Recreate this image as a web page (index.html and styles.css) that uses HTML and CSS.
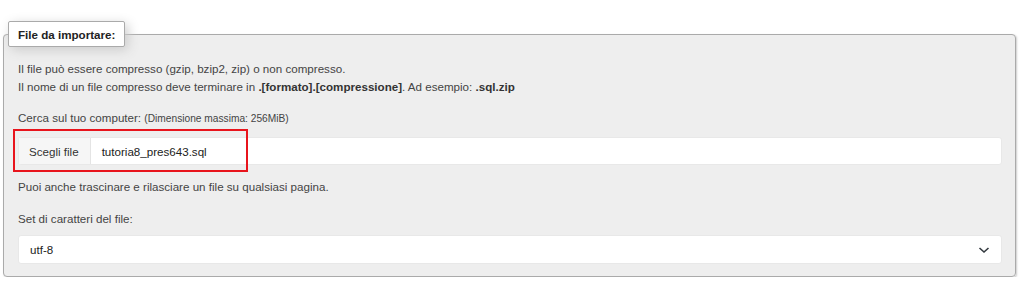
FILE: index.html
```html
<!DOCTYPE html>
<html lang="it">
<head>
    <meta charset="UTF-8">
    <title>Importa</title>
    <link rel="stylesheet" href="styles.css">
</head>
<body>
    <fieldset class="import-box">
        <legend>File da importare:</legend>
        <p class="hint">Il file può essere compresso (gzip, bzip2, zip) o non compresso.<br>
        Il nome di un file compresso deve terminare in <b>.[formato].[compressione]</b>. Ad esempio: <b>.sql.zip</b></p>

        <p class="label">Cerca sul tuo computer: <small>(Dimensione massima: 256MiB)</small></p>
        <div class="file-wrap">
            <div class="file-input">
                <span class="file-btn">Scegli file</span>
                <span class="file-name">tutoria8_pres643.sql</span>
            </div>
            <div class="highlight"></div>
        </div>

        <p class="label">Puoi anche trascinare e rilasciare un file su qualsiasi pagina.</p>

        <p class="label charset">Set di caratteri del file:</p>
        <div class="select">
            <span>utf-8</span>
            <svg width="12" height="8" viewBox="0 0 12 8"><path d="M1.5 2 L6 6 L10.5 2" fill="none" stroke="#343a40" stroke-width="1.6"/></svg>
        </div>
    </fieldset>
</body>
</html>
```

FILE: styles.css
```css
body {
    font-family: "Liberation Sans", Arial, sans-serif;
    font-size: 11.6px;
    color: #444;
    margin: 0;
    padding: 21px 8px 0 3px;
    background: #fff;
}
.import-box {
    margin: 0;
    padding: 13px 13px 12px 14px;
    background: #eee;
    border: 1px solid #aaa;
    border-radius: 4px;
    box-shadow: 1px 1px 2px #ccc;
}
.import-box legend {
    background: #fff;
    border: 1px solid #aaa;
    border-radius: 2px;
    box-shadow: 3px 3px 12px #ccc;
    padding: 6px 9px 5px 9px;
    margin-left: -10px;
    font-weight: bold;
    color: #222;
}
p {
    margin: 0;
    line-height: 18px;
}
b {
    color: #333;
}
.label {
    margin-top: 13px;
}
.charset {
    margin-top: 14px;
}
small {
    font-size: 10.2px;
}
.file-wrap {
    position: relative;
    margin-top: 9px;
    margin-bottom: 1px;
}
.file-input {
    display: flex;
    height: 26px;
    background: #fff;
    border: 1px solid #e8e8e8;
    border-radius: 3px;
    color: #222;
}
.file-btn {
    display: flex;
    align-items: center;
    padding: 0 11px 0 10px;
    background: #f6f6f6;
    border-right: 1px solid #e4e4e4;
    color: #333;
}
.file-name {
    display: flex;
    align-items: center;
    padding-left: 11px;
}
.highlight {
    position: absolute;
    left: -5px;
    top: -8px;
    width: 231px;
    height: 39px;
    border: 2px solid #e8141c;
}
.select {
    display: flex;
    align-items: center;
    justify-content: space-between;
    height: 27px;
    margin-top: 7px;
    padding: 0 11px 0 11px;
    background: #fff;
    border: 1px solid #e8e8e8;
    border-radius: 3px;
    color: #222;
}
```
